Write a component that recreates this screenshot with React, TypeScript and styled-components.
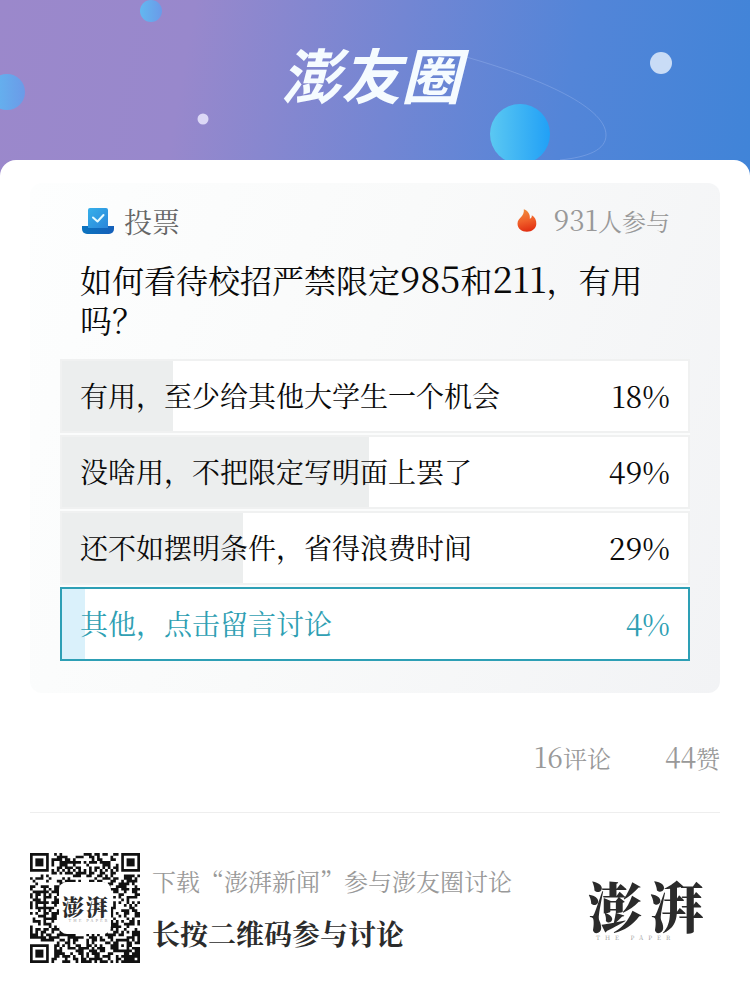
import React from "react";
import styled, { createGlobalStyle, css } from "styled-components";

const serif = `"Noto Serif CJK SC", "Noto Sans CJK SC", "Liberation Serif", serif`;
const sans = `"Noto Sans CJK SC", "Liberation Sans", sans-serif`;

const GlobalStyle = createGlobalStyle`
  * { box-sizing: border-box; }
  body {
    margin: 0;
    background: #ffffff;
    color: #0a0a0a;
    font-family: ${serif};
    font-weight: 400;
  }
  h1, h2, p { margin: 0; font-weight: inherit; }
`;

const Page = styled.div`
  display: flex;
  flex-direction: column;
  min-height: 100vh;
`;

const Banner = styled.header`
  position: relative;
  display: flex;
  justify-content: center;
  height: 176px;
  padding: 28px 8px 0 0;
  overflow: hidden;
  background: linear-gradient(100deg, #9b88cb 0%, #9888cc 25%, #7386d3 52%, #5385d8 75%, #4084d8 100%);
`;

const Backdrop = styled.svg`
  position: absolute;
  inset: 0;
  width: 100%;
  height: 100%;
`;

const BannerTitle = styled.h1`
  position: relative;
  color: #f5fbff;
  font-family: ${sans};
  font-size: 60px;
  line-height: 90px;
  font-weight: 700;
  font-style: italic;
`;

const Sheet = styled.main`
  position: relative;
  flex: 1;
  margin-top: -16px;
  padding: 23px 30px 40px;
  border-radius: 16px 16px 0 0;
  background: #ffffff;
`;

const Card = styled.section`
  padding: 20px 30px 32px;
  border-radius: 12px;
  background: linear-gradient(110deg, #fdfefe 0%, #f9fafa 45%, #f2f3f5 100%);
`;

const CardHead = styled.div`
  display: flex;
  align-items: center;
  justify-content: space-between;
  height: 36px;
  padding: 0 20px;
`;

const Kind = styled.div`
  display: flex;
  align-items: center;
  gap: 10px;
  color: #666666;
  font-size: 28px;
  line-height: 36px;
`;

const Joined = styled.div`
  display: flex;
  align-items: center;
  gap: 16px;
  color: #999999;
  font-size: 24px;
  line-height: 36px;
`;

const Num = styled.span<{ $size: number }>`
  font-size: ${(p) => p.$size}px;
  line-height: 1;
`;

const Question = styled.h2`
  margin: 20px 20px;
  font-size: 32px;
  line-height: 40px;
`;

const Options = styled.div`
  display: flex;
  flex-direction: column;
  gap: 2px;
  background: #fbfcfc;
`;

const Option = styled.button<{ $share: number; $chosen: boolean }>`
  display: flex;
  align-items: center;
  justify-content: space-between;
  width: 100%;
  height: 74px;
  padding: 0 18px 2px;
  border: 2px solid #f0f1f1;
  font: inherit;
  font-size: 28px;
  line-height: 40px;
  text-align: left;
  color: #0a0a0a;
  cursor: pointer;
  background: linear-gradient(
      90deg,
      ${(p) => (p.$chosen ? "#daf1fb" : "#eceeee")} ${(p) => p.$share}%,
      #ffffff ${(p) => p.$share}%
    )
    border-box;
  ${(p) =>
    p.$chosen &&
    css`
      border-color: #2d9fb5;
      color: #2f9fb3;
    `}
`;

const Stats = styled.div`
  display: flex;
  justify-content: flex-end;
  gap: 54px;
  margin: 47px 0 36px;
  color: #999999;
  font-size: 24px;
  line-height: 36px;
`;

const Footer = styled.footer`
  display: flex;
  align-items: center;
  padding-top: 40px;
  border-top: 1px solid #eeeeee;
`;

const QrBox = styled.div`
  position: relative;
  flex: none;
  width: 110px;
  height: 110px;
`;

const QrBadge = styled.div`
  position: absolute;
  inset: 29px;
  display: flex;
  flex-direction: column;
  align-items: center;
  justify-content: center;
  border-radius: 8px;
  background: #ffffff;
`;

const FooterText = styled.div`
  flex: 1;
  padding-left: 12px;
`;

const Hint = styled.p`
  color: #999999;
  font-size: 24px;
  line-height: 36px;
`;

const Action = styled.p`
  margin-top: 14px;
  color: #2b2b2b;
  font-size: 28px;
  line-height: 40px;
  font-weight: 700;
`;

const Brand = styled.div`
  display: flex;
  flex-direction: column;
  padding-right: 16px;
`;

const BrandName = styled.div<{ $size: number; $gap: number }>`
  display: flex;
  gap: ${(p) => p.$gap}px;
  color: #2b2b2b;
  font-size: ${(p) => p.$size}px;
  line-height: 1.1;
  font-weight: 900;
`;

const BrandSub = styled.div<{ $size: number }>`
  padding-left: 8px;
  color: #999999;
  font-size: ${(p) => p.$size}px;
  line-height: 1;
  letter-spacing: ${(p) => (p.$size > 5 ? 5 : 2)}px;
`;

const N = 41;

function inFinder(x: number, y: number) {
  const hit = (fx: number, fy: number) => x >= fx && x < fx + 8 && y >= fy && y < fy + 8;
  return hit(0, 0) || hit(N - 8, 0) || hit(0, N - 8);
}

function qrPath() {
  let seed = 20211;
  let d = "";
  for (let y = 0; y < N; y++) {
    for (let x = 0; x < N; x++) {
      seed = (seed * 48271) % 2147483647;
      if (inFinder(x, y)) continue;
      const ax = Math.abs(x - 34);
      const ay = Math.abs(y - 34);
      const ring = Math.max(ax, ay);
      let dark = (seed >> 8) % 100 < 52;
      if (ring <= 2) dark = ring !== 1;
      else if (x === 6) dark = y % 2 === 0;
      else if (y === 6) dark = x % 2 === 0;
      if (dark) d += `M${x} ${y}h1v1h-1z`;
    }
  }
  return d;
}

const modules = qrPath();

const Finder = ({ x, y }: { x: number; y: number }) => (
  <g fill="#111">
    <path fillRule="evenodd" d={`M${x} ${y}h7v7h-7zM${x + 1} ${y + 1}v5h5v-5z`} />
    <rect x={x + 2} y={y + 2} width="3" height="3" />
  </g>
);

const QrCode = () => (
  <QrBox>
    <svg width="110" height="110" viewBox={`0 0 ${N} ${N}`} role="img" aria-label="二维码">
      <path d={modules} fill="#111" />
      <Finder x={0} y={0} />
      <Finder x={N - 7} y={0} />
      <Finder x={0} y={N - 7} />
    </svg>
    <QrBadge>
      <BrandName $size={22} $gap={2}>
        <span>澎</span>
        <span>湃</span>
      </BrandName>
      <BrandSub $size={4}>THE PAPER</BrandSub>
    </QrBadge>
  </QrBox>
);

const VoteIcon = () => (
  <svg width="34" height="28" viewBox="0 0 34 28" aria-hidden="true">
    <defs>
      <linearGradient id="ballot" x1="0" y1="0" x2="1" y2="1">
        <stop offset="0" stopColor="#36b0ea" />
        <stop offset="1" stopColor="#2a86da" />
      </linearGradient>
      <linearGradient id="tray" x1="0" y1="0" x2="1" y2="0">
        <stop offset="0" stopColor="#0c74bf" />
        <stop offset="1" stopColor="#1560ba" />
      </linearGradient>
    </defs>
    <path d="M2 19h32v3a5 5 0 0 1-5 5H7a5 5 0 0 1-5-5z" fill="url(#tray)" />
    <path d="M8 3a2 2 0 0 1 2-2h16a2 2 0 0 1 2 2v18H8z" fill="url(#ballot)" />
    <path
      d="M13 10.500l4.500 4 6-6.500"
      fill="none"
      stroke="#e6fbff"
      strokeWidth="2"
      strokeLinecap="round"
      strokeLinejoin="round"
    />
  </svg>
);

const FireIcon = () => (
  <svg width="20" height="24" viewBox="0 0 20 24" aria-hidden="true">
    <defs>
      <linearGradient id="flame" x1="0.4" y1="0" x2="0.6" y2="1">
        <stop offset="0" stopColor="#f08a3c" />
        <stop offset="0.5" stopColor="#f0602a" />
        <stop offset="1" stopColor="#e02c10" />
      </linearGradient>
    </defs>
    <path
      d="M6.800 0.300C10.500 1.500 13.500 5 12.800 9.800c1.500-.5 2.200-1.800 2-3.600C17.800 8 19.600 11 19.300 15c-.3 4.700-4.200 7.700-9.400 7.700S.6 19.500.5 14.700C.4 11.500 2.500 9.800 4.300 7.800 6 5.800 7.200 3.500 6.800.3z"
      fill="url(#flame)"
    />
  </svg>
);

const Scene = () => (
  <Backdrop viewBox="0 0 750 176" preserveAspectRatio="xMidYMin slice" aria-hidden="true">
    <defs>
      <linearGradient id="planet">
        <stop offset="0" stopColor="#5bc8f2" />
        <stop offset="1" stopColor="#21a0f6" />
      </linearGradient>
      <linearGradient id="moon">
        <stop offset="0" stopColor="#62b8f0" />
        <stop offset="1" stopColor="#6b9ae8" />
      </linearGradient>
    </defs>
    <path
      d="M466 57C530 75 606 105 606 135C606 150 588 157 560 160"
      fill="none"
      stroke="#9cb6ee"
      strokeOpacity="0.4"
    />
    <circle cx="520" cy="134" r="30" fill="url(#planet)" />
    <circle cx="661" cy="63" r="11" fill="#c9dcf6" />
    <circle cx="203" cy="119" r="5.500" fill="#dcd8f6" />
    <circle cx="151" cy="11" r="11" fill="url(#moon)" />
    <circle cx="7" cy="92" r="18" fill="url(#moon)" />
  </Backdrop>
);

const options = [
  { label: "有用，至少给其他大学生一个机会", share: 18, chosen: false },
  { label: "没啥用，不把限定写明面上罢了", share: 49, chosen: false },
  { label: "还不如摆明条件，省得浪费时间", share: 29, chosen: false },
  { label: "其他，点击留言讨论", share: 4, chosen: true },
];

export default function App() {
  return (
    <Page lang="zh-CN">
      <GlobalStyle />
      <Banner>
        <Scene />
        <BannerTitle>澎友圈</BannerTitle>
      </Banner>
      <Sheet>
        <Card>
          <CardHead>
            <Kind>
              <VoteIcon />
              投票
            </Kind>
            <Joined>
              <FireIcon />
              <span>
                <Num $size={28}>931</Num>人参与
              </span>
            </Joined>
          </CardHead>
          <Question>
            如何看待校招严禁限定<Num $size={36}>985</Num>和<Num $size={36}>211</Num>，有用吗？
          </Question>
          <Options>
            {options.map((o) => (
              <Option key={o.label} type="button" aria-pressed={o.chosen} $share={o.share} $chosen={o.chosen}>
                <span>{o.label}</span>
                <Num $size={30}>{o.share}%</Num>
              </Option>
            ))}
          </Options>
        </Card>
        <Stats>
          <span>
            <Num $size={28}>16</Num>评论
          </span>
          <span>
            <Num $size={28}>44</Num>赞
          </span>
        </Stats>
        <Footer>
          <QrCode />
          <FooterText>
            <Hint>下载“澎湃新闻”参与澎友圈讨论</Hint>
            <Action>长按二维码参与讨论</Action>
          </FooterText>
          <Brand>
            <BrandName $size={54} $gap={8}>
              <span>澎</span>
              <span>湃</span>
            </BrandName>
            <BrandSub $size={6}>THE PAPER</BrandSub>
          </Brand>
        </Footer>
      </Sheet>
    </Page>
  );
}
